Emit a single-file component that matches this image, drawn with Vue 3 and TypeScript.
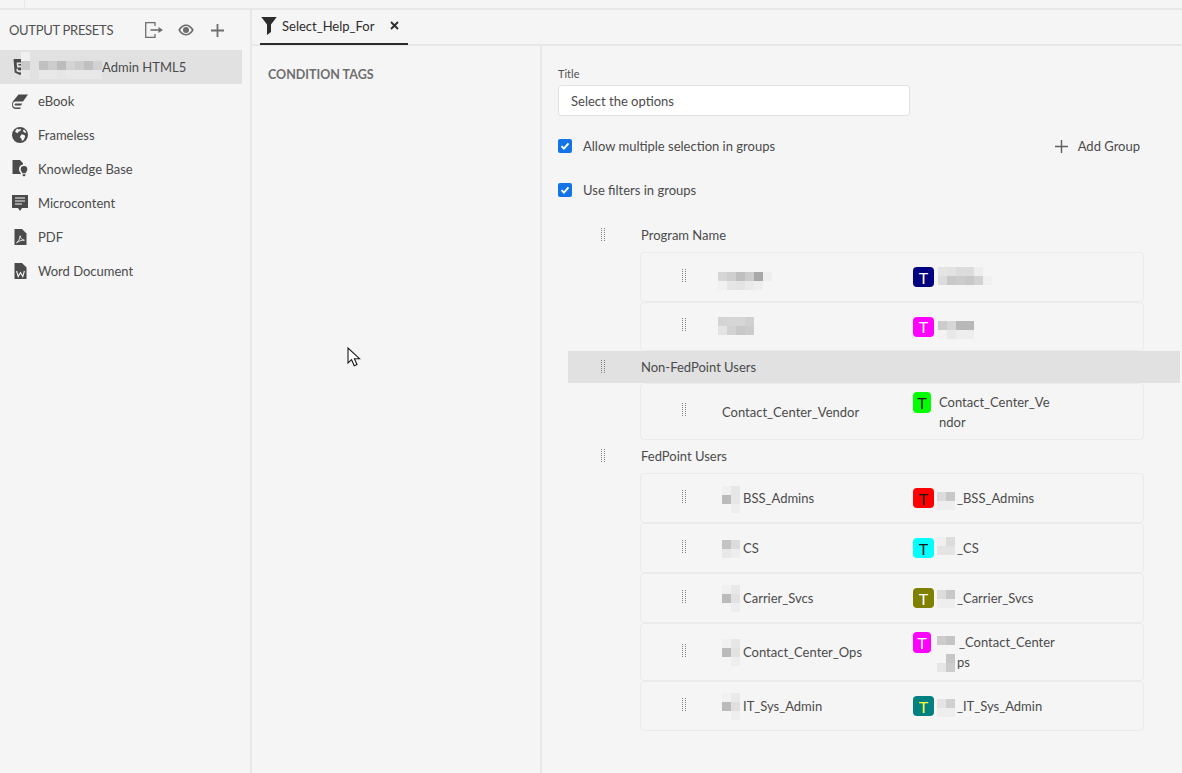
<script setup lang="ts">
interface Row {
  name: string
  namePad: number
  color: string
  ink: string
  lines: string[]
  tagPad: number
  tall?: boolean
}
interface Group {
  title: string
  active?: boolean
  rows: Row[]
}
const presets = ['', 'eBook', 'Frameless', 'Knowledge Base', 'Microcontent', 'PDF', 'Word Document']

const groups: Group[] = [
  {
    title: 'Program Name',
    rows: [
      { name: '', namePad: 0, color: '#000080', ink: '#ffffff', lines: [''], tagPad: 0 },
      { name: '', namePad: 0, color: '#ff00ff', ink: '#ffffff', lines: [''], tagPad: 0 }
    ]
  },
  {
    title: 'Non-FedPoint Users',
    active: true,
    rows: [
      { name: 'Contact_Center_Vendor', namePad: 0, color: '#00ff00', ink: '#1a1a1a', lines: ['Contact_Center_Ve', 'ndor'], tagPad: 0, tall: true }
    ]
  },
  {
    title: 'FedPoint Users',
    rows: [
      { name: 'BSS_Admins', namePad: 21, color: '#ff0000', ink: '#1a1a1a', lines: ['_BSS_Admins'], tagPad: 19 },
      { name: 'CS', namePad: 21, color: '#00ffff', ink: '#1a1a1a', lines: ['_CS'], tagPad: 19 },
      { name: 'Carrier_Svcs', namePad: 21, color: '#808000', ink: '#ffffff', lines: ['_Carrier_Svcs'], tagPad: 19 },
      { name: 'Contact_Center_Ops', namePad: 21, color: '#ff00ff', ink: '#ffffff', lines: ['_Contact_Center', 'ps'], tagPad: 20, tall: true },
      { name: 'IT_Sys_Admin', namePad: 21, color: '#008080', ink: '#ffff33', lines: ['_IT_Sys_Admin'], tagPad: 19 }
    ]
  }
]

// Pixelated redaction blocks: [left, top, rows of grey shades]
const blocks: [number, number, string[][]][] = [
  [21, 52, [['f0'], ['c9'], ['e8']]],
  [39, 61, [['c0', 'cc', 'bc', 'd4', 'cc', 'c0', 'd2'], ['e8', 'e8', 'e6', 'e8', 'e8', 'e8', 'e8']]],
  [718, 272, [['d6', 'cf', 'bf', 'cc', 'a8', 'ee'], ['f1', 'e6', 'e4', 'ea', 'ee', 'f5']]],
  [938, 267, [['e4', 'e2', 'dc', 'dc', 'ee', 'f5'], ['dc', 'c8', 'cc', 'c8', 'd2', 'f0']]],
  [718, 317, [['d4', 'd6', 'd6', 'd0'], ['e4', 'd2', 'c8', 'cc']]],
  [938, 321, [['cc', 'd6', 'b8', 'b8'], ['f2', 'e8', 'ee', 'ee']]],
  [722, 486, [['f0', 'e6'], ['bb', 'e6'], ['f5', 'ee']]],
  [722, 540, [['c4', 'dc'], ['e8', 'ee']]],
  [722, 585, [['f0', 'e8'], ['bb', 'e2'], ['f5', 'ee']]],
  [722, 639, [['f0', 'e6'], ['bb', 'e2'], ['f5', 'ee']]],
  [722, 693, [['f2', 'ea'], ['bb', 'e0'], ['f5', 'ee']]],
  [937, 492, [['dc', 'c8'], ['ee', 'ee']]],
  [937, 537, [['f0', 'dc'], ['e4', 'e4']]],
  [937, 590, [['dc', 'c8'], ['ee', 'ee']]],
  [937, 636, [['cc', 'c4'], ['f5', 'f5'], ['f5', 'c6'], ['e6', 'cc']]],
  [937, 699, [['e4', 'd0'], ['ee', 'ee']]]
]

const cells = blocks.flatMap(([left, top, rows]) =>
  rows.flatMap((row, r) =>
    row.map((shade, c) => ({
      left: left + c * 9,
      top: top + r * 9,
      color: '#' + shade + shade + shade
    }))
  )
)
</script>

<template>
  <div class="page">
    <div class="topstrip"><span class="tick"></span></div>
    <div class="main">
      <aside class="sidebar">
        <div class="side-head">
          <span class="side-title">OUTPUT PRESETS</span>
          <svg class="hicon first" width="18" height="16" viewBox="0 0 18 16" fill="none" stroke="#6e6e6e" stroke-width="1.3">
            <path d="M10 4V.7H.7v14.6H10V12" />
            <path d="M5.5 8h9" stroke-width="1.6" />
            <path d="M13.5 5L18 8l-4.5 3z" fill="#6e6e6e" stroke="none" />
          </svg>
          <svg class="hicon second" width="16" height="12" viewBox="0 0 16 12">
            <path d="M8 0.6C4.4 0.6 1.6 3.2 0.3 6c1.3 2.8 4.1 5.4 7.7 5.4s6.4-2.6 7.7-5.4C14.4 3.2 11.6 0.6 8 0.6zM8 10C5.6 10 3.4 8.3 2.2 6 3.4 3.7 5.6 2 8 2s4.6 1.7 5.8 4C12.6 8.3 10.4 10 8 10z" fill="#6e6e6e" />
            <circle cx="8" cy="6" r="3" fill="#6e6e6e" />
          </svg>
          <svg class="hicon" width="13" height="13" viewBox="0 0 13 13">
            <path d="M5.6 0h1.8v5.6H13v1.8H7.4V13H5.6V7.4H0V5.6h5.6z" fill="#6e6e6e" />
          </svg>
        </div>
        <ul class="preset-list">
          <li v-for="(label, i) in presets" :key="i" class="preset" :class="{ selected: i === 0 }">
            <span class="preset-icon">
              <svg v-if="i === 0" width="14" height="16" viewBox="0 0 14 16"><path d="M0.5 0h13l-1.2 13.6L7 16l-5.3-2.4zM3.6 3.5l.5 5h5l-.2 2.4-1.9.6-1.9-.6-.1-1.2H3.4l.2 2.8L7 13.6l3.4-1.1.6-6H5.5l-.1-1.4h5.8l.2-1.6z" fill="#4b4b4b" fill-rule="evenodd" /></svg>
              <svg v-else-if="i === 1" width="16" height="15" viewBox="0 0 16 15"><path d="M6.5 .5H16L11 7.6H3.6C2 7.6 .9 8.8 .9 10.6c0 1.7 1.1 2.9 2.6 2.9H9L8 15H3.3C1.3 15 0 13 0 10.8 0 9.4.5 8 1.2 7z" fill="#4b4b4b" /><path d="M3.6 9.6h6.6l-1.2 2H3.6c-.6 0-1-.4-1-1s.4-1 1-1z" fill="#4b4b4b" /></svg>
              <svg v-else-if="i === 2" width="16" height="16" viewBox="0 0 16 16"><path d="M8 0a8 8 0 1 0 0 16A8 8 0 0 0 8 0zM5 1.6l1.8 1 1.6-.8.6 1-1 1.4-1.6.3-.4 1.4-1.6-.2L3 4.5zM9.6 7.2l2.8.8.8 1.5-1.4 3.2-1.8 1.3-.6-2.2-1.6-1.8zM12 2.4l1.5 1.6.8 2-2-.4-1.6-1.6z" fill="#4b4b4b" fill-rule="evenodd" /></svg>
              <svg v-else-if="i === 3" width="16" height="18" viewBox="0 0 16 18"><path d="M0.5 0H8l3 3.2V4.4A5 5 0 0 0 7 9.4c0 1.4.7 2.4 1.4 3.3.4.5.6 1 .6 1.3H0.5z" fill="#4b4b4b" /><path d="M12 6a3.3 3.3 0 0 0-3.3 3.4c0 1.5 1.3 2.3 1.7 3.8h3.2c.4-1.5 1.7-2.3 1.7-3.8A3.3 3.3 0 0 0 12 6zM10.6 14.2h2.8v1.2l-.7.9h-1.4l-.7-.9z" fill="#4b4b4b" /></svg>
              <svg v-else-if="i === 4" width="16" height="17" viewBox="0 0 16 17"><path d="M0 0h16v13h-6l-2 3-2-3H0z" fill="#4b4b4b" /><path d="M3 3h10M3 6h10M3 9h7" stroke="#f5f5f5" stroke-width="1.2" /></svg>
              <svg v-else-if="i === 5" width="13" height="16" viewBox="0 0 13 16"><path d="M0.5 0H8l4.5 4.5V16H0.5z" fill="#4b4b4b" /><path d="M2.5 13.8c2-1 3.4-4 3.6-7 .5 2.6 1.9 4 4.3 4.4-2.8 0-5.6.7-7.9 2.6z" fill="none" stroke="#f5f5f5" stroke-width=".9" /></svg>
              <svg v-else width="13" height="16" viewBox="0 0 13 16"><path d="M0.5 0H8l4.5 4.5V16H0.5z" fill="#4b4b4b" /><path d="M2.6 8l1.6 5.5 2.3-4 2.3 4L10.4 8" fill="none" stroke="#f5f5f5" stroke-width="1.1" /></svg>
            </span>
            <span class="preset-label">
              <template v-if="i === 0"><span class="pad-admin"></span>Admin HTML5</template>
              <template v-else>{{ label }}</template>
            </span>
          </li>
        </ul>
      </aside>

      <section class="workspace">
        <div class="tabbar">
          <div class="tab">
            <svg width="16" height="18" viewBox="0 0 16 18"><path d="M0.3 0h15.4L10 7.6V15l-4 3V7.6z" fill="#2c2c2c" /></svg>
            <span class="tab-label">Select_Help_For</span>
            <svg class="tab-x" width="9" height="9" viewBox="0 0 9 9"><path d="M1 1l7 7M8 1L1 8" stroke="#2c2c2c" stroke-width="1.8" /></svg>
          </div>
        </div>
        <div class="panes">
          <div class="tags-pane"><h2 class="tags-title">CONDITION TAGS</h2></div>
          <div class="form-pane">
            <label class="field-label">Title</label>
            <div class="field-input">Select the options</div>
            <div class="option-row">
              <span class="check"><svg width="10" height="10" viewBox="0 0 10 10"><path d="M1.5 5.2l2.4 2.5 4.6-5.4" fill="none" stroke="#fff" stroke-width="1.9" /></svg></span>
              <span>Allow multiple selection in groups</span>
              <span class="add-group">
                <svg width="13" height="13" viewBox="0 0 13 13"><path d="M5.8 0h1.4v5.8H13v1.4H7.2V13H5.8V7.2H0V5.8h5.8z" fill="#5f5f5f" /></svg>
                Add Group
              </span>
            </div>
            <div class="option-row second">
              <span class="check"><svg width="10" height="10" viewBox="0 0 10 10"><path d="M1.5 5.2l2.4 2.5 4.6-5.4" fill="none" stroke="#fff" stroke-width="1.9" /></svg></span>
              <span>Use filters in groups</span>
            </div>

            <div class="groups">
              <div v-for="g in groups" :key="g.title" class="group">
                <div class="group-head" :class="{ active: g.active }">
                  <svg class="handle" width="5" height="14" viewBox="0 0 5 14"><path d="M.5 0v14M3.5 0v14" stroke="#808080" stroke-dasharray="1 1" /></svg>
                  <span class="group-title">{{ g.title }}</span>
                </div>
                <div class="rows">
                  <div v-for="(r, ri) in g.rows" :key="ri" class="row" :class="{ tall: r.tall }">
                    <svg class="handle" width="5" height="14" viewBox="0 0 5 14"><path d="M.5 0v14M3.5 0v14" stroke="#808080" stroke-dasharray="1 1" /></svg>
                    <span class="row-name"><span class="pad" :style="{ width: r.namePad + 'px' }"></span>{{ r.name }}</span>
                    <span class="tag-cell" :class="{ wrapped: r.lines.length > 1 }">
                      <span class="tag" :style="{ background: r.color, color: r.ink }">T</span>
                      <span class="tag-text">
                        <span v-for="(l, li) in r.lines" :key="li" class="tag-line"><span class="pad" :style="{ width: (li === 0 ? r.tagPad : Math.max(r.tagPad - 2, 0)) + 'px' }"></span>{{ l }}</span>
                      </span>
                    </span>
                  </div>
                </div>
              </div>
            </div>
          </div>
        </div>
      </section>
    </div>

    <div class="redactions" aria-hidden="true">
      <i v-for="(c, i) in cells" :key="i" class="cell" :style="{ left: c.left + 'px', top: c.top + 'px', background: c.color }"></i>
    </div>

    <svg class="cursor" width="14" height="21" viewBox="0 0 14 21"><path d="M1 1v15l3.6-3.3 2.6 6 2.8-1.2-2.6-5.8H12.5z" fill="#fff" stroke="#1a1a1a" stroke-width="1.1" /></svg>
  </div>
</template>

<style>
html, body { margin: 0; background: #f5f5f5; }
</style>

<style scoped>
.page {
  position: relative;
  width: 1182px;
  height: 773px;
  overflow: hidden;
  background: #f5f5f5;
  color: #4b4b4b;
  font-family: "Lato", "Liberation Sans", sans-serif;
  font-size: 13px;
}
.topstrip { height: 8px; border-bottom: 2px solid #e8e8e8; }
.tick { display: block; width: 1px; height: 8px; margin-left: 24px; background: #e8e8e8; }
.main { display: flex; height: 763px; }
.sidebar { width: 250px; flex: none; border-right: 2px solid #e8e8e8; }
.side-head { display: flex; align-items: center; height: 40px; padding-left: 9px; }
.side-title { width: 136px; color: #505050; letter-spacing: -0.3px; }
.hicon { flex: none; }
.hicon.first { margin-right: 15px; }
.hicon.second { margin-right: 17px; }
.preset-list { list-style: none; margin: 0; padding: 0; }
.preset { display: flex; align-items: center; width: 242px; height: 34px; }
.preset.selected { background: #e1e1e1; }
.preset-icon { display: flex; justify-content: center; width: 36px; padding-left: 2px; flex: none; }
.pad-admin { display: inline-block; width: 64px; }
.workspace { flex: 1; min-width: 0; display: flex; flex-direction: column; }
.tabbar { display: flex; height: 34px; padding-left: 8px; border-bottom: 2px solid #e8e8e8; }
.tab { display: flex; align-items: center; gap: 5px; width: 148px; height: 35px; box-sizing: border-box; border-bottom: 2px solid #2c2c2c; padding: 0 0 2px 1px; color: #2c2c2c; }
.tab-label { width: 96px; white-space: nowrap; }
.tab-x { margin-left: 7px; }
.panes { display: flex; flex: 1; min-height: 0; }
.tags-pane { width: 272px; flex: none; border-right: 2px solid #e8e8e8; padding: 21px 0 0 16px; }
.tags-title { margin: 0; font-size: 12.5px; font-weight: 700; line-height: 16px; color: #6e6e6e; }
.form-pane { flex: 1; min-width: 0; padding: 20px 0 0 16px; }
.field-label { display: block; font-size: 11px; line-height: 16px; margin-bottom: 3px; color: #505050; }
.field-input { width: 352px; height: 31px; box-sizing: border-box; border: 1px solid #e1e1e1; border-radius: 3px; background: #fff; line-height: 30px; padding-left: 12px; }
.option-row { display: flex; align-items: center; gap: 11px; height: 18px; margin-top: 21px; width: 582px; }
.option-row.second { margin-top: 26px; }
.check { display: flex; align-items: center; justify-content: center; width: 14px; height: 14px; border-radius: 2px; background: #1473e6; flex: none; }
.add-group { margin-left: auto; display: flex; align-items: center; gap: 10px; }
.groups { margin-top: 21px; margin-left: 10px; }
.group-head { display: flex; align-items: center; height: 32px; box-sizing: border-box; padding-bottom: 2px; }
.group:last-child .group-head { height: 33px; }
.group-head .handle { margin-left: 33px; flex: none; }
.group-title { margin-left: 35px; }
.group-head.active { background: #e1e1e1; width: 612px; padding-bottom: 1px; }
.rows { margin-left: 72px; width: 504px; }
.row { display: flex; align-items: center; height: 50px; box-sizing: border-box; border: 1px solid #ebebeb; border-radius: 4px; }
.group:first-child .row:last-child { height: 49px; }
.row.tall { height: 58px; }
.active + .rows .row.tall { height: 57px; }
.row .handle { margin-left: 41px; margin-top: -3px; flex: none; }
.row-name { width: 191px; margin-left: 35px; flex: none; }
.pad { display: inline-block; }
.tag-cell { display: flex; align-items: center; gap: 4px; }
.tag-cell.wrapped { align-items: flex-start; gap: 8px; }
.tag { display: flex; align-items: center; justify-content: center; width: 21px; height: 20px; border-radius: 4px; flex: none; font-size: 16px; }
.wrapped .tag { width: 18px; height: 21px; }
.tag-line { display: block; line-height: 20px; white-space: nowrap; }
.redactions { position: absolute; inset: 0; pointer-events: none; }
.cell { position: absolute; width: 9px; height: 9px; }
.cursor { position: absolute; left: 347px; top: 347px; }
</style>
